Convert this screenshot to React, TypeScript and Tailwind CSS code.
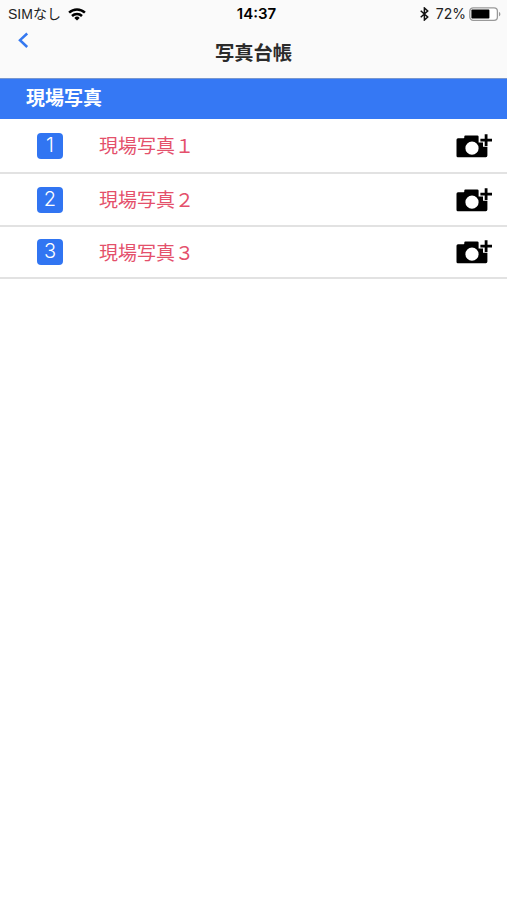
const photos = [
  { id: 1, title: "現場写真１" },
  { id: 2, title: "現場写真２" },
  { id: 3, title: "現場写真３" },
];

const WifiIcon = () => (
  <svg width="18" height="13" viewBox="0 0 18 13" fill="none" stroke="#000" strokeWidth="2.5">
    <path d="M1.1 4.7a11.4 11.4 0 0 1 15.8 0" />
    <path d="M4 8a7.2 7.2 0 0 1 10 0" />
    <path d="M9 12.6L6.3 9.9a3.9 3.9 0 0 1 5.4 0z" fill="#000" stroke="none" />
  </svg>
);

const BluetoothIcon = () => (
  <svg width="9" height="14" viewBox="0 0 9 14" fill="none" stroke="#111" strokeWidth="1.5">
    <path d="M0.7 3.8L7.7 10L4.4 13V1L7.7 4L0.7 10.2" />
  </svg>
);

const BatteryIcon = () => (
  <svg width="32" height="15" viewBox="0 0 32 15">
    <rect x="0.8" y="0.8" width="27.6" height="12.6" rx="3.4" fill="#fff" stroke="#999" strokeWidth="1.3" />
    <rect x="2.4" y="2.6" width="18" height="9" rx="0.8" fill="#000" />
    <path d="M30 4.9c1.8.6 1.8 3.8 0 4.4z" fill="#999" />
  </svg>
);

const CameraIcon = () => (
  <svg width="36" height="24" viewBox="0 0 36 24">
    <path
      fillRule="evenodd"
      d="M2 4.2H7.6Q8.3 4.2 8.3 3.5V2.6Q8.3 1.6 9.3 1.6H21.4Q22.4 1.6 22.6 2.6V8.4H27V12.8H31.4V21.5Q31.4 23.2 29.8 23.2H1.8Q0.5 23.2 0.5 21.7V5.7Q0.5 4.2 2 4.2ZM16 7.6a6.6 6.6 0 1 0 0 13.2a6.6 6.6 0 1 0 0-13.2Z"
    />
    <path d="M30.1 0.3V11.9M24.4 6.1H36" stroke="#000" strokeWidth="2.8" />
  </svg>
);

const App = () => {
  return (
    <div className="min-h-screen bg-white font-[Inter,'Noto_Sans_CJK_JP',sans-serif] text-black">
      <header className="h-[79px] border-b border-[#7797cf] bg-[#fafafa]">
        <div className="grid h-7 grid-cols-3 items-center pl-2 pr-1.5 text-[14px] leading-none">
          <div className="flex items-center gap-[7px]">
            <span className="whitespace-nowrap font-['Liberation_Sans','Noto_Sans_CJK_JP',sans-serif] text-[#222]">SIMなし</span>
            <WifiIcon />
          </div>
          <span className="pb-0.5 pl-1 text-center text-[15px] font-semibold">14:37</span>
          <div className="flex items-center justify-end">
            <BluetoothIcon />
            <span className="ml-[7px] mr-[3px] text-[#222]">72%</span>
            <BatteryIcon />
          </div>
        </div>
        <div className="grid h-[50px] grid-cols-3 px-[18px]">
          <button className="mt-[4px] h-4 w-3" aria-label="戻る">
            <svg width="12" height="16" viewBox="0 0 12 16" fill="none" stroke="#3478f0" strokeWidth="2.5">
              <path d="M9.2 1.5L2 8.2L9.2 15" />
            </svg>
          </button>
          <h1 className="pt-[11px] text-center text-[19.3px] font-bold leading-[29px] text-[#2b2b2b]">写真台帳</h1>
        </div>
      </header>

      <h2 className="h-10 bg-[#3578f4] pl-[26px] pt-px text-[19px] font-bold leading-[38px] text-white">現場写真</h2>

      <ul>
        {photos.map((photo) => (
          <li
            key={photo.id}
            className="flex h-[53px] items-center border-b-2 border-[#e2e2e2] pl-[37px] pr-[15px] first:h-[55px] last:h-[52px]"
          >
            <span className="flex h-[26px] w-[26px] items-center justify-center rounded-[4px] bg-[#3175f2] pb-0.5 text-[20px] font-light leading-none text-white">
              {photo.id}
            </span>
            <span className="ml-9 flex-1 pt-[3px] text-[19px] leading-7 text-[#e4506b]">{photo.title}</span>
            <button aria-label="写真を追加">
              <CameraIcon />
            </button>
          </li>
        ))}
      </ul>
    </div>
  );
};

export default App;
